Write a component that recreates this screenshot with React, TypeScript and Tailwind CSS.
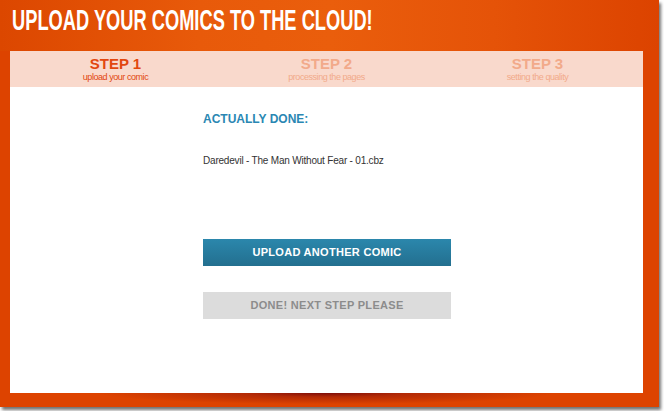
import React from "react";

export default function App() {
  return (
    <div className="w-[664px] h-[411px] bg-white overflow-hidden" style={{ fontFamily: '"Liberation Sans", Arial, sans-serif' }}>
      <div className="w-[659px] h-[407px] bg-[#dd4300] shadow-[2px_3px_3px_rgba(0,0,0,0.55)] flex flex-col">
        <div className="h-[51px] bg-[linear-gradient(90deg,#dc4700_0%,#e85a0a_30%,#ea5e0c_50%,#e55308_75%,#dc4300_100%)] pl-[12px] pt-[3px] overflow-hidden">
          <div
            className="origin-left scale-x-[0.63] whitespace-nowrap text-white text-[29px] leading-[34px] font-bold"
            style={{ fontFamily: '"Liberation Sans", Arial, sans-serif' }}
          >
            UPLOAD YOUR COMICS TO THE CLOUD!
          </div>
        </div>
        <div className="ml-[10px] w-[633px] h-[342px] bg-white flex flex-col">
          <div className="h-[36px] bg-[#f9d9cc] grid grid-cols-3 pt-[5px] text-center">
            <div>
              <div className="text-[15px] leading-[16px] font-bold text-[#e2470f]">STEP 1</div>
              <div className="text-[9px] leading-[10px] tracking-[-0.45px] text-[#e2470f]">upload your comic</div>
            </div>
            <div>
              <div className="text-[15px] leading-[16px] font-bold text-[#f2aa8a]">STEP 2</div>
              <div className="text-[9px] leading-[10px] tracking-[-0.45px] text-[#f2aa8a]">processing the pages</div>
            </div>
            <div>
              <div className="text-[15px] leading-[16px] font-bold text-[#f2aa8a]">STEP 3</div>
              <div className="text-[9px] leading-[10px] tracking-[-0.45px] text-[#f2aa8a]">setting the quality</div>
            </div>
          </div>
          <div className="pl-[193px] pt-[25px] flex flex-col">
            <div className="text-[12px] leading-[14px] font-bold text-[#2a87b3]">ACTUALLY DONE:</div>
            <div className="mt-[29px] text-[10px] leading-[12px] tracking-[-0.2px] text-[#333333]">Daredevil - The Man Without Fear - 01.cbz</div>
            <button className="mt-[72px] w-[248px] h-[27px] bg-[linear-gradient(180deg,#2b87ac_0%,#236f8f_100%)] text-white text-[11px] font-bold tracking-[0.3px]">
              UPLOAD ANOTHER COMIC
            </button>
            <button className="mt-[26px] w-[248px] h-[27px] bg-[#dcdcdc] text-[#8c8c8c] text-[11px] font-bold tracking-[0.3px]">
              DONE! NEXT STEP PLEASE
            </button>
          </div>
        </div>
        <div className="h-[14px] ml-[10px] w-[633px] bg-[radial-gradient(ellipse_36%_80%_at_50%_0%,rgba(120,10,10,0.95)_0%,rgba(150,25,10,0.6)_35%,rgba(221,67,0,0)_100%)]" />
      </div>
    </div>
  );
}
